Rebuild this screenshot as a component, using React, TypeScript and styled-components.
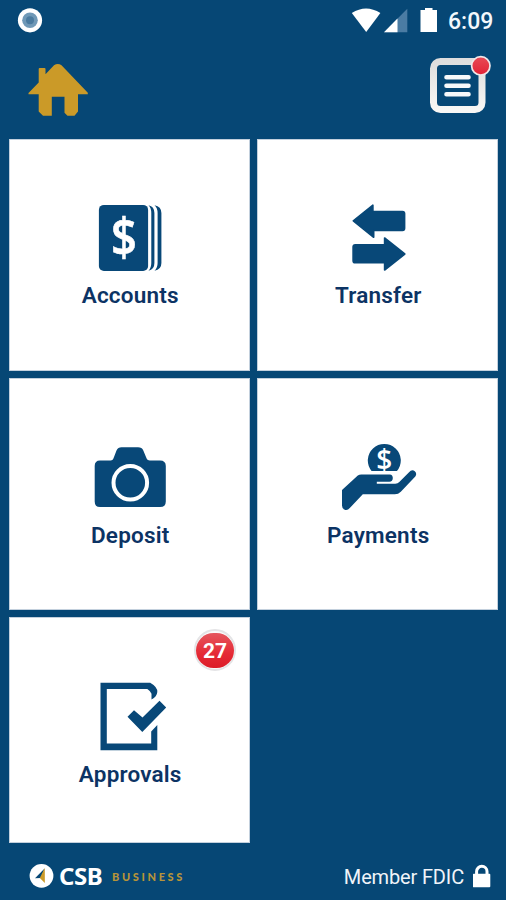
import React from "react";
import styled, { createGlobalStyle } from "styled-components";

const BLUE = "#064775";
const ICON = "#084878";
const GOLD = "#cb9a28";

const GlobalStyle = createGlobalStyle`
  *, *::before, *::after { box-sizing: border-box; }
  body { margin: 0; background: ${BLUE}; font-family: Roboto, "Liberation Sans", sans-serif; }
  svg { display: block; flex: none; }
`;

const Screen = styled.div`
  width: 506px;
  height: 900px;
  overflow: hidden;
  display: flex;
  flex-direction: column;
  background: ${BLUE};
`;

const StatusBar = styled.div`
  height: 42px;
  display: flex;
  align-items: center;
  justify-content: space-between;
  padding: 0 12px 0 17px;
`;

const StatusGroup = styled.div`
  display: flex;
  align-items: center;
`;

const Clock = styled.span`
  color: #f3f8fc;
  font-size: 23px;
  font-weight: 500;
  line-height: 42px;
  width: 46px;
  margin: 1px 0 -1px 9px;
  white-space: nowrap;
`;

const Header = styled.header`
  height: 97px;
  display: flex;
  justify-content: space-between;
  padding: 12px 14px 0 26px;
`;

const IconButton = styled.button`
  appearance: none;
  border: 0;
  padding: 0;
  background: none;
  display: flex;
  align-self: flex-start;
`;

const Grid = styled.main`
  display: grid;
  grid-template-columns: 241px 241px;
  grid-template-rows: 232px 232px 226px;
  gap: 7px;
  padding-left: 9px;
`;

const Tile = styled.button`
  appearance: none;
  border: 0;
  padding: 61px 0 0;
  background: #fff;
  box-shadow: inset 0 0 0 1px #c3d0dd;
  display: flex;
  flex-direction: column;
  align-items: center;
  justify-content: flex-start;
  position: relative;
  font-family: inherit;
`;

const Label = styled.span<{ $gap: number }>`
  color: #0c3364;
  font-size: 22.5px;
  font-weight: 600;
  line-height: 26px;
  margin-top: ${(p) => p.$gap}px;
  padding-left: 1.5px;
  letter-spacing: 0.2px;
  white-space: nowrap;
`;

const Badge = styled.span`
  position: absolute;
  top: 12px;
  right: 14px;
  width: 42px;
  height: 42px;
  border-radius: 50%;
  border: 2px solid #e4e4e6;
  background: #fafafa;
  display: flex;
  align-items: center;
  justify-content: center;
`;

const BadgeFill = styled.span`
  width: 38px;
  height: 35px;
  flex: none;
  border-radius: 18px;
  background: linear-gradient(#e5565e, #e52a35 60%, #dc1c28);
  color: #fff;
  font-size: 21px;
  font-weight: 700;
  line-height: 36px;
  text-align: center;
`;

const Footer = styled.footer`
  flex: 1;
  display: flex;
  align-items: center;
  justify-content: space-between;
  padding: 9px 15px 0 29px;
`;

const Brand = styled.div`
  display: flex;
  align-items: center;
`;

const BrandName = styled.span`
  font-family: "Noto Sans", "Open Sans", sans-serif;
  font-size: 24px;
  font-weight: 700;
  line-height: 30px;
  color: #fff;
  letter-spacing: -0.4px;
  margin: -1px 0 0 5px;
  width: 47px;
`;

const BrandUnit = styled.span`
  font-family: Lato, sans-serif;
  font-size: 11px;
  font-weight: 900;
  letter-spacing: 2.65px;
  line-height: 14px;
  color: #b79439;
  margin: 2px 0 0 6px;
`;

const Member = styled.div`
  display: flex;
  align-items: center;
  gap: 9px;
  color: #f0f4f9;
  font-size: 20px;
  line-height: 26px;
`;

const MemberText = styled.span`
  letter-spacing: -0.15px;
  margin-top: 1px;
`;

const RecordIcon = () => (
  <svg width="26" height="26" viewBox="0 0 26 26">
    <circle cx="13" cy="12.3" r="12.1" fill="#fff" />
    <circle cx="13" cy="12.3" r="7.8" fill="#7099b7" />
    <circle cx="13" cy="12.3" r="4" fill="#4b7b9f" />
  </svg>
);

const SignalIcons = () => (
  <svg width="88" height="42" viewBox="351 0 88 42">
    <path d="M351.8 13Q366 4 380.4 13L366.2 32Z" fill="#fff" />
    <path d="M384 32.3L407.3 8.8V32.3Z" fill="#4b7ca3" />
    <path d="M384 32.3L397.5 18.5V32.3Z" fill="#fff" />
    <path d="M425 8H432.5V10H437V32H420.5V10H425Z" fill="#fff" />
  </svg>
);

const HomeIcon = () => (
  <svg width="64" height="66" viewBox="26 54 64 66">
    <path
      d="M28.5 94.3V93L38.7 82.5V69Q38.7 68 39.7 68H44.5Q45.5 68 45.5 69V74.3L54 65.3Q57.8 62.8 61.5 65.3L87.8 92.7V94.3H78V111.5L74.5 115.8H67.5L64.5 112.8V96.8H51.8V115.8H43L38.7 111.5V94.3Z"
      fill={GOLD}
    />
  </svg>
);

const MenuIcon = () => (
  <svg width="64" height="62" viewBox="428 54 64 62">
    <defs>
      <linearGradient id="frame" x1="0" y1="0" x2="0" y2="1">
        <stop offset="0" stopColor="#dedddd" />
        <stop offset="1" stopColor="#f8f7f5" />
      </linearGradient>
      <linearGradient id="dot" x1="0" y1="0" x2="0" y2="1">
        <stop offset="0" stopColor="#e84a56" />
        <stop offset="1" stopColor="#e32236" />
      </linearGradient>
    </defs>
    <rect x="433.5" y="61.5" width="48.5" height="48" rx="7" fill="none" stroke="url(#frame)" strokeWidth="7" />
    <path d="M446.5 77.3H468.5M446.5 85.8H468.5M446.5 94.3H468.5" stroke="#f7f8fa" strokeWidth="4.6" strokeLinecap="round" />
    <circle cx="480.8" cy="65.8" r="9.2" fill="url(#dot)" stroke="#efe7e9" strokeWidth="1.7" />
  </svg>
);

const AccountsIcon = () => (
  <svg width="90" height="76" viewBox="85 200 90 76">
    <rect x="98.9" y="204.9" width="49.2" height="66" rx="5" fill={ICON} />
    <path d="M148.5 205.2Q154.4 206.5 154.4 213V263Q154.4 269.5 148.5 270.7Q151.3 268 151.3 263V213Q151.3 208 148.5 205.2Z" fill={ICON} />
    <path d="M154.5 205.2Q161.4 206.5 161.4 213V263Q161.4 269.5 154.5 270.7Q157.6 268 157.6 263V213Q157.6 208 154.5 205.2Z" fill={ICON} />
    <text x="123.9" y="256.3" fill="#fff" stroke="#fff" strokeWidth="0.6" fontFamily="Open Sans, sans-serif" fontSize="53" fontWeight="600" textAnchor="middle" textLength="26" lengthAdjust="spacingAndGlyphs">$</text>
  </svg>
);

const TransferIcon = () => (
  <svg width="90" height="76" viewBox="332.7 200 90 76">
    <path
      d="M353 220.8L372.6 205.2V211.5H402.2Q404.3 211.5 404.3 213.6V228.2Q404.3 230.4 402.2 230.4H373.4V237.3Z"
      fill={ICON} stroke={ICON} strokeWidth="1.6" strokeLinejoin="round"
    />
    <path
      d="M404.5 254L384.3 238V244.7H355Q352.8 244.7 352.8 246.8V260.7Q352.8 262.8 355 262.8H384.3V270Z"
      fill={ICON} stroke={ICON} strokeWidth="1.6" strokeLinejoin="round"
    />
  </svg>
);

const DepositIcon = () => (
  <svg width="90" height="76" viewBox="85 439 90 76">
    <path
      d="M100 460.5H110.5Q113 460.5 114 457L116.5 450.5Q118 447.3 121.5 447.3H138Q142 447.3 143.3 450.5L146 457Q147 460.5 150 460.5H160Q165.8 460.5 165.8 466V501.5Q165.8 507 160 507H100Q94.7 507 94.7 501.5V466Q94.7 460.5 100 460.5Z"
      fill={ICON}
    />
    <circle cx="130.3" cy="482.8" r="16.8" fill="none" stroke="#fff" strokeWidth="4" />
  </svg>
);

const PaymentsIcon = () => (
  <svg width="90" height="76" viewBox="332.7 439 90 76">
    <path d="M371.3 471A16.5 16.5 0 1 1 396.7 471Z" fill={ICON} />
    <text x="384" y="470" fill="#fff" fontFamily="Open Sans, sans-serif" fontSize="28" fontWeight="600" textAnchor="middle">$</text>
    <path
      d="M341.7 490L357.5 475.6Q359 474.4 361 474.4H389.5Q392.5 474.8 392.5 478Q392.5 481.5 389 481.8H376.5V483.7H395Q397.5 483.7 399 482L408.5 472.5Q411.5 469 414.5 471.2Q417 473.5 415 476.5L400.5 491.8Q398 494.3 394.5 494.3H362.5L349.5 508Q347 511 344 509.5Q341.7 508.5 341.7 505.5Z"
      fill={ICON}
    />
  </svg>
);

const ApprovalsIcon = () => (
  <svg width="90" height="76" viewBox="85 678 90 76">
    <path
      d="M100.5 682.8H150.2Q157.5 687 157.3 692Q157 696.5 151.5 699.5V693.8Q150.5 691 147.3 689H106.8V743.5H151.2V731.5L157.3 725V750.3H100.5Z"
      fill={ICON}
    />
    <path d="M127.5 716.8L134 710.2L142.5 717.5L159.5 700.8L166.2 707.5L142.3 732Z" fill={ICON} />
  </svg>
);

const BrandMark = () => (
  <svg width="25" height="26" viewBox="29 862 25 26">
    <circle cx="41.5" cy="874.8" r="11.9" fill="#fff" />
    <path d="M44.6 867.5L35 877.3L41 877Z" fill={BLUE} />
    <path d="M44.8 867V882L39.8 877Z" fill={GOLD} />
  </svg>
);

const LockIcon = () => (
  <svg width="18" height="26" viewBox="473 863 18 26">
    <path d="M476.6 875V871.5A5.2 5.2 0 0 1 487 871.5V875" fill="none" stroke="#fff" strokeWidth="3" />
    <rect x="472.8" y="873.8" width="17.5" height="13.4" rx="1" fill="#fff" />
  </svg>
);

const tiles = [
  { label: "Accounts", Icon: AccountsIcon, gap: 6 },
  { label: "Transfer", Icon: TransferIcon, gap: 6 },
  { label: "Deposit", Icon: DepositIcon, gap: 7 },
  { label: "Payments", Icon: PaymentsIcon, gap: 7 },
  { label: "Approvals", Icon: ApprovalsIcon, gap: 7, count: 27 },
];

export default function App() {
  return (
    <>
      <GlobalStyle />
      <Screen>
        <StatusBar>
          <RecordIcon />
          <StatusGroup>
            <SignalIcons />
            <Clock>6:09</Clock>
          </StatusGroup>
        </StatusBar>
        <Header>
          <IconButton aria-label="Home"><HomeIcon /></IconButton>
          <IconButton aria-label="Menu"><MenuIcon /></IconButton>
        </Header>
        <Grid>
          {tiles.map(({ label, Icon, gap, count }) => (
            <Tile key={label}>
              <Icon />
              <Label $gap={gap}>{label}</Label>
              {count && <Badge><BadgeFill>{count}</BadgeFill></Badge>}
            </Tile>
          ))}
        </Grid>
        <Footer>
          <Brand>
            <BrandMark />
            <BrandName>CSB</BrandName>
            <BrandUnit>BUSINESS</BrandUnit>
          </Brand>
          <Member>
            <MemberText>Member FDIC</MemberText>
            <LockIcon />
          </Member>
        </Footer>
      </Screen>
    </>
  );
}
